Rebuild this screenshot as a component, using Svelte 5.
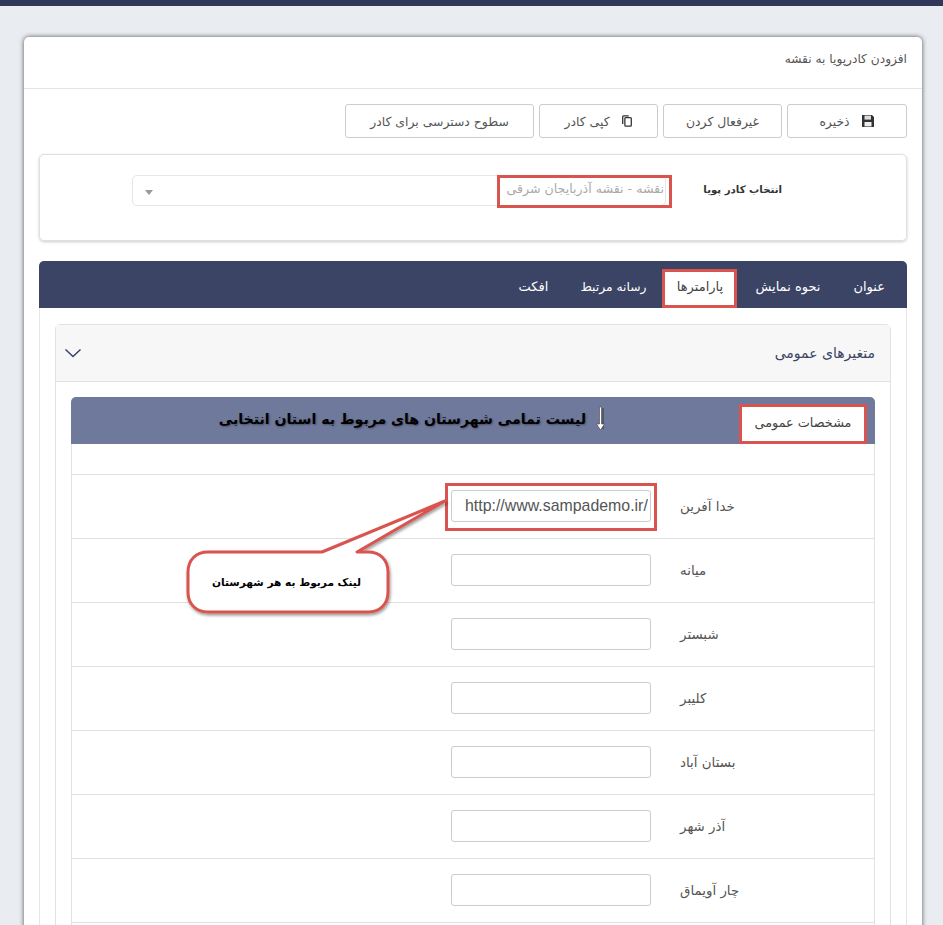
<script>
  const rows = [
    { name: 'خدا آفرین', value: 'http://www.sampademo.ir/' },
    { name: 'میانه', value: '' },
    { name: 'شبستر', value: '' },
    { name: 'کلیبر', value: '' },
    { name: 'بستان آباد', value: '' },
    { name: 'آذر شهر', value: '' },
    { name: 'چار آویماق', value: '' },
    { name: '', value: '' }
  ];
  const tabs = ['عنوان', 'نحوه نمایش', 'پارامترها', 'رسانه مرتبط', 'افکت'];
</script>

<div class="page" dir="rtl">
  <div class="topbar"></div>
  <main class="card">
    <header class="card-head">افزودن کادرپویا به نقشه</header>
    <div class="card-body">
      <div class="actions">
        <button class="b1">
          <svg width="14" height="14" viewBox="0 0 14 14"><path d="M1 1h10l2 2v10H1z" fill="#333"/><rect x="3.5" y="1.6" width="6.5" height="4" fill="#ddd"/><rect x="3.5" y="8" width="7" height="4.4" fill="#eee"/></svg>
          <span>ذخیره</span>
        </button>
        <button class="b2">غیرفعال کردن</button>
        <button class="b3">
          <svg width="12" height="14" viewBox="0 0 14 15" fill="none" stroke="#333" stroke-width="1.5"><rect x="4.5" y="3.5" width="7.5" height="10" rx="1"/><path d="M2 11V2.5a1 1 0 0 1 1-1h6"/></svg>
          <span>کپی کادر</span>
        </button>
        <button class="b4">سطوح دسترسی برای کادر</button>
      </div>

      <section class="picker">
        <span class="picker-label">انتخاب کادر پویا</span>
        <div class="select">
          <span class="value">نقشه - نقشه آذربایجان شرقی</span>
          <i class="caret"></i>
        </div>
      </section>

      <nav class="tabs">
        {#each tabs as t, i}
          <span class="tab" class:active={i === 2}>{t}</span>
        {/each}
      </nav>

      <div class="tab-body">
        <section class="accordion">
          <div class="acc-head">
            <span>متغیرهای عمومی</span>
            <svg width="18" height="10" viewBox="0 0 18 10" fill="none" stroke="#3a4363" stroke-width="1.5"><path d="M1.5 1.5 9 8.5l7.5-7"/></svg>
          </div>
          <div class="acc-body">
            <div class="subtabs">
              <span class="subtab">مشخصات عمومی</span>
              <strong class="note">لیست تمامی شهرستان های مربوط به استان انتخابی</strong>
            </div>
            <div class="table">
              <div class="spacer"></div>
              {#each rows as r}
                <div class="row">
                  <span class="name">{r.name}</span>
                  <input dir="ltr" value={r.value} aria-label={r.name || 'field'} />
                </div>
              {/each}
            </div>
          </div>
        </section>
      </div>
    </div>
  </main>

  <div class="mark m-select"></div>
  <div class="mark m-input"></div>
  <svg class="arrow" width="16" height="28" viewBox="0 0 16 28">
    <path d="M8 1v21" stroke="#333" stroke-width="2" transform="translate(2 2)" opacity=".45"/>
    <path d="M6.5 2h2v17h3l-4 6-4-6h3z" fill="#fff" stroke="#444" stroke-width=".6"/>
  </svg>
  <svg class="bubble" width="280" height="130" viewBox="0 0 280 130">
    <defs>
      <filter id="sh" x="-10%" y="-10%" width="120%" height="130%"><feDropShadow dx="1" dy="2" stdDeviation="1.6" flood-color="#000" flood-opacity=".4"/></filter>
    </defs>
    <path filter="url(#sh)" fill="#fff" stroke="#d9534f" stroke-width="3" stroke-linejoin="round"
      d="M27 64 H141 L264 13 L176 64 H187 C199 64 207 72 207 84 V104 C207 116 199 124 187 124 H27 C15 124 7 116 7 104 V84 C7 72 15 64 27 64 Z"/>
  </svg>
  <strong class="bubble-text" dir="rtl">لینک مربوط به هر شهرستان</strong>
</div>

<style>
  :global(html), :global(body) { margin: 0; background: #e9ecf1; overflow: hidden; }
  .page {
    position: relative;
    height: 925px;
    overflow: hidden;
    background: #e9ecf1;
    font-family: "DejaVu Sans", "Noto Sans", sans-serif;
    font-size: 12.4px;
    color: #444;
  }
  .topbar { height: 6px; background: #30375a; }
  .card {
    margin: 31px 21px 0 24px;
    background: #fff;
    border-radius: 5px 5px 0 0;
    box-shadow: 0 0 5px rgba(0, 0, 0, .65);
    height: 1000px;
  }
  .card-head {
    height: 52px;
    box-sizing: border-box;
    padding: 15px 15px 0;
    border-bottom: 1px solid #e4e4e4;
    color: #555;
    font-size: 12.2px;
  }
  .card-body { padding: 15px 15px 0; }
  .actions { display: flex; gap: 5px; }
  button {
    display: flex;
    align-items: center;
    justify-content: center;
    gap: 11px;
    height: 34px;
    padding: 0;
    background: #fff;
    border: 1px solid #ccc;
    border-radius: 3px;
    font: inherit;
    color: #555;
  }
  .b1 { width: 120px; }
  .b2 { width: 119px; }
  .b3 { width: 119px; }
  .b4 { width: 189px; }
  .picker {
    margin-top: 16px;
    height: 87px;
    box-sizing: border-box;
    padding: 20px 124px 0 0;
    display: flex;
    border: 1px solid #e0e0e0;
    border-radius: 5px;
    box-shadow: 0 1px 3px rgba(0, 0, 0, .2);
  }
  .picker-label {
    width: 116px;
    flex: none;
    padding-top: 9px;
    white-space: nowrap;
    font-weight: bold;
    font-size: 10.2px;
    color: #333;
  }
  .select {
    position: relative;
    flex: 1;
    height: 31px;
    box-sizing: border-box;
    margin-left: 92px;
    padding: 5px 1px 0 0;
    border: 1px solid #e6e6e6;
    border-radius: 5px;
    color: #aaa;
    font-size: 12.6px;
  }
  .caret {
    position: absolute;
    left: 12px;
    top: 14px;
    border: 4px solid transparent;
    border-top: 5px solid #999;
    border-bottom: 0;
  }
  .tabs {
    display: flex;
    align-items: flex-end;
    height: 47px;
    margin-top: 20px;
    box-sizing: border-box;
    padding: 0 6px;
    background: #3b4465;
    border-radius: 5px 5px 0 0;
  }
  .tab {
    padding: 0 16px;
    height: 39px;
    line-height: 36px;
    box-sizing: border-box;
    color: #fff;
    font-size: 13px;
  }
  .tab:nth-child(2) { padding: 0 17px 0 18px; }
  .tab:nth-child(4) { font-size: 12.3px; }
  .tab.active {
    width: 75px;
    padding: 0;
    text-align: center;
    background: #fff;
    color: #444;
    border: 3px solid #d9534f;
    border-radius: 0;
    line-height: 30px;
  }
  .tab-body {
    padding: 16px 15px 0;
    border: 1px solid #e6e6e6;
    border-top: 0;
  }
  .accordion { border: 1px solid #e2e2e2; border-radius: 5px 5px 0 0; }
  .acc-head {
    display: flex;
    align-items: center;
    justify-content: space-between;
    height: 57px;
    box-sizing: border-box;
    padding: 0 15px 0 8px;
    background: #f7f7f7;
    border-bottom: 1px solid #e2e2e2;
    color: #3a4363;
    font-size: 14px;
  }
  .acc-body { padding: 15px 15px 0; }
  .subtabs {
    position: relative;
    display: flex;
    align-items: flex-end;
    height: 47px;
    padding-right: 8px;
    background: #6f799c;
    border-radius: 5px 5px 0 0;
  }
  .subtab {
    width: 128px;
    height: 40px;
    box-sizing: border-box;
    border: 3px solid #d9534f;
    background: #fff;
    line-height: 32px;
    text-align: center;
    font-size: 12.8px;
  }
  .note {
    position: absolute;
    right: 289px;
    top: 14px;
    color: #000;
    font-size: 14.1px;
    white-space: nowrap;
    text-shadow: 1px 1px 2px rgba(0, 0, 0, .35);
  }
  .table { border: 1px solid #e2e2e2; border-top: 0; }
  .spacer { height: 30px; }
  .row {
    display: flex;
    align-items: center;
    height: 64px;
    box-sizing: border-box;
    padding: 0 133px 2px 0;
    border-top: 1px solid #e0e0e0;
  }
  .name {
    width: 90px;
    box-sizing: border-box;
    padding: 2px 0 0 29px;
    flex: none;
    text-align: left;
    white-space: nowrap;
    font-size: 13.4px;
    color: #555;
  }
  input {
    width: 200px;
    height: 32px;
    box-sizing: border-box;
    padding: 0 2px 0 13px;
    border: 1px solid #ccc;
    border-radius: 3px;
    background: #fff;
    color: #555;
    font-family: "Liberation Sans", Arial, sans-serif;
    font-size: 15.9px;
    outline: none;
  }
  .mark { position: absolute; box-sizing: border-box; border: 3px solid #d9534f; pointer-events: none; }
  .m-select { left: 497px; top: 175px; width: 175px; height: 33px; }
  .m-input { left: 445px; top: 483px; width: 212px; height: 48px; }
  .arrow { position: absolute; left: 593px; top: 405px; }
  .bubble { position: absolute; left: 181px; top: 488px; }
  .bubble-text {
    position: absolute;
    left: 212px;
    top: 576px;
    color: #000;
    font-size: 10.6px;
    white-space: nowrap;
  }
</style>
